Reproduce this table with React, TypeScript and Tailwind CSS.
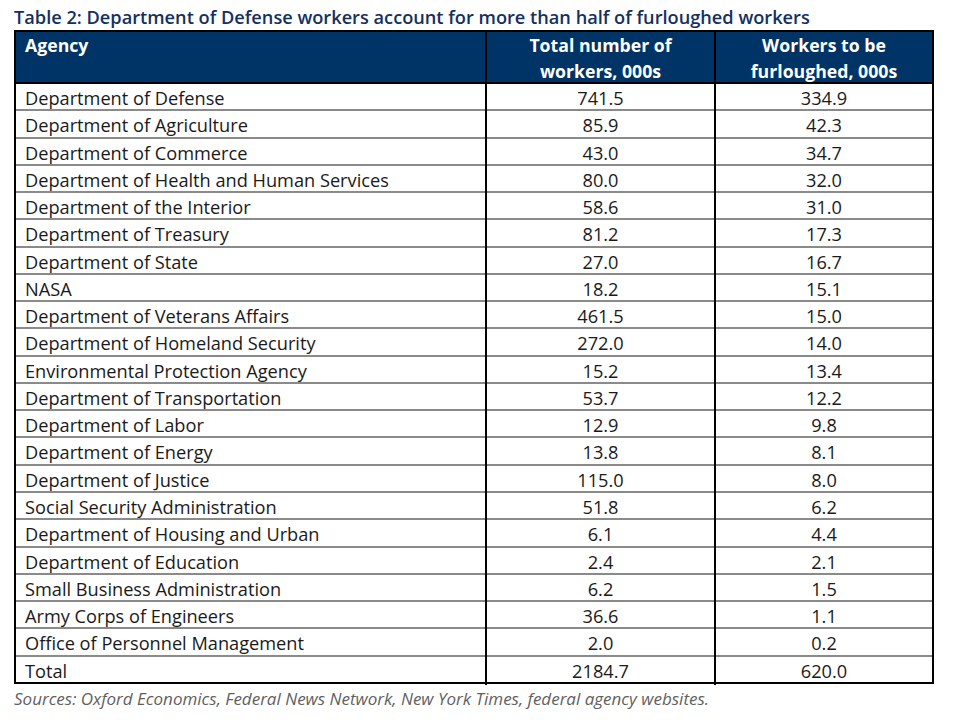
const rows: [string, string, string][] = [
  ['Department of Defense', '741.5', '334.9'],
  ['Department of Agriculture', '85.9', '42.3'],
  ['Department of Commerce', '43.0', '34.7'],
  ['Department of Health and Human Services', '80.0', '32.0'],
  ['Department of the Interior', '58.6', '31.0'],
  ['Department of Treasury', '81.2', '17.3'],
  ['Department of State', '27.0', '16.7'],
  ['NASA', '18.2', '15.1'],
  ['Department of Veterans Affairs', '461.5', '15.0'],
  ['Department of Homeland Security', '272.0', '14.0'],
  ['Environmental Protection Agency', '15.2', '13.4'],
  ['Department of Transportation', '53.7', '12.2'],
  ['Department of Labor', '12.9', '9.8'],
  ['Department of Energy', '13.8', '8.1'],
  ['Department of Justice', '115.0', '8.0'],
  ['Social Security Administration', '51.8', '6.2'],
  ['Department of Housing and Urban', '6.1', '4.4'],
  ['Department of Education', '2.4', '2.1'],
  ['Small Business Administration', '6.2', '1.5'],
  ['Army Corps of Engineers', '36.6', '1.1'],
  ['Office of Personnel Management', '2.0', '0.2'],
  ['Total', '2184.7', '620.0'],
];

export default function App() {
  return (
    <div className="w-[967px] h-[720px] bg-white pl-[14px] pt-[4px] font-['Open_Sans',sans-serif]">
      <h1 className="text-[18.2px] leading-[26px] font-semibold text-[#14305f] whitespace-nowrap">
        Table 2: Department of Defense workers account for more than half of furloughed workers
      </h1>

      <div className="w-[920px] border-l-2 border-r-2 border-black">
        {/* Header */}
        <div className="grid grid-cols-[469px_229px_218px] h-[54px] bg-[#003366] border-t-2 border-b-2 border-black text-white font-bold text-[17.7px] leading-[26px]">
          <div className="pl-[9px]">Agency</div>
          <div className="border-l-2 border-black text-center">
            Total number of
            <br />
            workers, 000s
          </div>
          <div className="border-l-2 border-black text-center">
            Workers to be
            <br />
            furloughed, 000s
          </div>
        </div>

        {/* Body */}
        {rows.map(([agency, total, furloughed], i) => (
          <div
            key={agency}
            className={`grid grid-cols-[469px_229px_218px] h-[27.27px] text-[18.2px] leading-[27px] text-[#1a1a1a] ${
              i === rows.length - 1 ? 'border-b-2 border-black' : 'border-b-2 border-[#8a8a8a]'
            }`}
          >
            <div className="pl-[9px] pt-[1px] whitespace-nowrap">{agency}</div>
            <div className="border-l-2 border-black text-center pt-[1px]">{total}</div>
            <div className="border-l-2 border-black text-center pt-[1px]">{furloughed}</div>
          </div>
        ))}
      </div>

      <p className="mt-[3px] text-[17px] leading-[24px] italic text-[#5f5f5f] whitespace-nowrap">
        Sources: Oxford Economics, Federal News Network, New York Times, federal agency websites.
      </p>
    </div>
  );
}
